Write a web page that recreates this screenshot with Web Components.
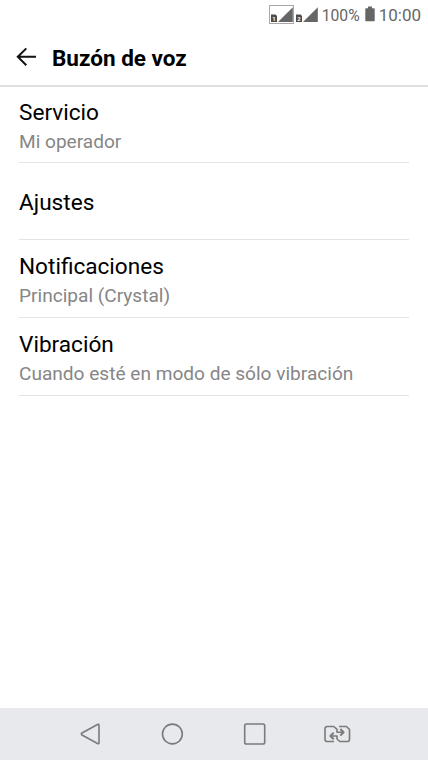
<!DOCTYPE html>
<html lang="es">
<head>
<meta charset="utf-8">
<title>Buzón de voz</title>
<style>
  html, body {
    margin: 0;
    height: 100%;
    overflow: hidden;
    background: #fff;
    font-family: Roboto, "Liberation Sans", sans-serif;
  }
</style>
</head>
<body>
<phone-screen>
  <status-bar slot="top" battery="100%" time="10:00"></status-bar>
  <app-header slot="top">Buzón de voz</app-header>
  <setting-row class="short" summary="Mi operador">Servicio</setting-row>
  <setting-row>Ajustes</setting-row>
  <setting-row class="tall" summary="Principal (Crystal)">Notificaciones</setting-row>
  <setting-row class="tall" summary="Cuando esté en modo de sólo vibración">Vibración</setting-row>
  <nav-bar slot="bottom"></nav-bar>
</phone-screen>

<script>
class PhoneScreen extends HTMLElement {
  constructor() {
    super();
    this.attachShadow({ mode: "open" }).innerHTML = `
      <style>
        :host {
          display: flex;
          flex-direction: column;
          width: 428px;
          height: 760px;
          background: #fff;
        }
        main {
          flex: 1;
          padding: 0 19px;
        }
        ::slotted(.short) {
          --row-height: 76px;
        }
        ::slotted(.tall) {
          --row-height: 78px;
        }
      </style>
      <slot name="top"></slot>
      <main><slot></slot></main>
      <slot name="bottom"></slot>
    `;
  }
}

class SimSignal extends HTMLElement {
  connectedCallback() {
    this.attachShadow({ mode: "open" }).innerHTML = `
      <style>
        :host {
          display: block;
          box-sizing: border-box;
          height: 19px;
          padding: 1px 0 1px 1px;
          border: 1px solid transparent;
        }
        :host([active]) {
          border-color: #a8a8a8;
        }
        svg {
          display: block;
        }
        text {
          font: bold 6px Roboto, sans-serif;
          fill: #fff;
        }
      </style>
      <svg width="22" height="15" viewBox="0 0 22 15">
        <path d="M0 7.5h4.5L6 9v6H0z" fill="#4c4c4c"/>
        <path d="M21.8 .3V15H7z" fill="#666"/>
        <text x="1.3" y="13.5">${this.getAttribute("sim")}</text>
      </svg>
    `;
  }
}

class StatusBar extends HTMLElement {
  connectedCallback() {
    this.attachShadow({ mode: "open" }).innerHTML = `
      <style>
        :host {
          display: flex;
          align-items: center;
          justify-content: flex-end;
          box-sizing: border-box;
          height: 30px;
          padding-right: 7px;
          color: #666;
        }
        sim-signal {
          margin-bottom: 1px;
        }
        .level {
          font-size: 15.7px;
          margin-left: 2.5px;
        }
        svg {
          margin: 0 4px 2px 5px;
        }
        .time {
          font-size: 17px;
        }
      </style>
      <sim-signal sim="1" active></sim-signal>
      <sim-signal sim="2"></sim-signal>
      <span class="level">${this.getAttribute("battery")}</span>
      <svg width="10" height="16" viewBox="0 0 10 16">
        <path d="M3 .5h4v1.7h2q.7 0 .7.7v11.6q0 .8-.8.8H1.1q-.8 0-.8-.8V2.9q0-.7.7-.7h2z" fill="#666"/>
      </svg>
      <span class="time">${this.getAttribute("time")}</span>
    `;
  }
}

class AppHeader extends HTMLElement {
  constructor() {
    super();
    this.attachShadow({ mode: "open" }).innerHTML = `
      <style>
        :host {
          display: flex;
          align-items: center;
          box-sizing: border-box;
          height: 57px;
          padding: 0 16px;
          border-bottom: 2px solid #dfdfdf;
        }
        svg {
          margin: 0 15px 2px 0;
        }
        h1 {
          margin: 0;
          font-size: 22.5px;
          font-weight: 700;
          line-height: 28px;
          color: #000;
        }
      </style>
      <svg width="21" height="20" viewBox="0 0 21 20">
        <path d="M20 9.8H2M10.3 1.4L1.8 9.8l8.5 8.4" fill="none" stroke="#111" stroke-width="2"/>
      </svg>
      <h1><slot></slot></h1>
    `;
  }
}

class SettingRow extends HTMLElement {
  connectedCallback() {
    const summary = this.getAttribute("summary");
    this.attachShadow({ mode: "open" }).innerHTML = `
      <style>
        :host {
          display: flex;
          flex-direction: column;
          justify-content: center;
          box-sizing: border-box;
          height: var(--row-height, 77px);
          padding-top: 4px;
          border-bottom: 1px solid #e4e4e4;
        }
        .title {
          font-size: 22.6px;
          line-height: 30px;
          color: #000;
        }
        .summary {
          font-size: 19.08px;
          line-height: 28px;
          color: #868686;
        }
      </style>
      <div class="title"><slot></slot></div>
      ${summary ? `<div class="summary">${summary}</div>` : ""}
    `;
  }
}

class NavBar extends HTMLElement {
  constructor() {
    super();
    this.attachShadow({ mode: "open" }).innerHTML = `
      <style>
        :host {
          display: flex;
          align-items: center;
          justify-content: center;
          gap: 54px;
          box-sizing: border-box;
          height: 52px;
          background: #e8e9ed;
        }
        svg {
          fill: none;
          stroke: #7b7b7d;
          stroke-width: 1.6;
          stroke-linejoin: round;
        }
      </style>
      <svg width="28" height="24" viewBox="0 0 28 24">
        <path d="M22 3.3v17.4q0 1.6-1.5.8L5 13q-1.4-1 0-2L20.5 2.5q1.5-.8 1.5.8z"/>
      </svg>
      <svg width="28" height="24" viewBox="0 0 28 24">
        <circle cx="13.4" cy="12" r="9.9"/>
      </svg>
      <svg width="28" height="24" viewBox="0 0 28 24">
        <rect x="3.7" y="2" width="20" height="20" rx="1.8"/>
      </svg>
      <svg width="28" height="24" viewBox="0 0 28 24">
        <path d="M11 19.5H4.3q-2.3 0-2.3-2.3V6.800q0-2.300 2.300-2.300h6.500l3.200 2.800v3h6"/>
        <path d="M16 4.500h7.500l3 3v9.700q0 2.300-2.300 2.300h-7.400l-2.800-2.500v-3H8"/>
        <path d="M17.300 7l3.300 3.300-3.300 3.200M10.700 10.700L7.400 14l3.300 3.300" stroke-width="2"/>
      </svg>
    `;
  }
}

customElements.define("phone-screen", PhoneScreen);
customElements.define("sim-signal", SimSignal);
customElements.define("status-bar", StatusBar);
customElements.define("app-header", AppHeader);
customElements.define("setting-row", SettingRow);
customElements.define("nav-bar", NavBar);
</script>
</body>
</html>
